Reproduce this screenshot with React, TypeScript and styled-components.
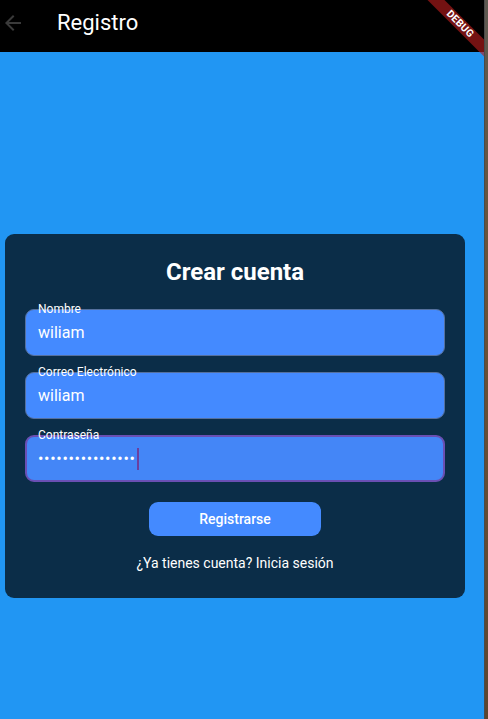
import React from "react";
import styled, { createGlobalStyle } from "styled-components";

const Global = createGlobalStyle`
  html, body { margin: 0; padding: 0; background: #5a4630; }
  body { font-family: Roboto, "Noto Sans", "Liberation Sans", sans-serif; }
  * { box-sizing: border-box; }
`;

const Screen = styled.div`
  display: flex;
  width: 488px;
  height: 719px;
  overflow: hidden;
`;

const Frame = styled.div`
  position: relative;
  width: 484px;
  height: 719px;
  overflow: hidden;
  background: #2196f3;
  display: flex;
  flex-direction: column;
`;

const Edge = styled.div`
  width: 1px;
  height: 719px;
  background: #4a4a4a;
`;

const Desk = styled.div`
  flex: 1;
  height: 719px;
  background: linear-gradient(180deg, #5e5a52 0%, #6b5238 40%, #5c4530 100%);
`;

const AppBar = styled.header`
  height: 52px;
  background: #000;
  display: flex;
  align-items: center;
  padding: 0 0 6px 1px;
`;

const BackIcon = styled.svg`
  width: 24px;
  height: 24px;
  fill: #3a3a3a;
`;

const Title = styled.h1`
  margin: 0 0 0 32px;
  font-size: 22px;
  font-weight: 400;
  color: #fff;
  line-height: 28px;
`;

const Banner = styled.div`
  position: absolute;
  left: 420px;
  top: 18px;
  width: 80px;
  height: 12px;
  transform: rotate(45deg);
  background: rgba(183, 28, 28, 0.63);
  color: #fff;
  font-size: 10.2px;
  font-weight: 700;
  line-height: 12px;
  text-align: center;
  letter-spacing: 0.2px;
`;

const Body = styled.main`
  flex: 1;
  padding: 182px 0 0 5px;
`;

const Card = styled.section`
  width: 460px;
  background: #0b2d48;
  border-radius: 9px;
  padding: 24px 20px 26px;
  display: flex;
  flex-direction: column;
  align-items: center;
`;

const Heading = styled.h2`
  margin: 0;
  font-size: 24px;
  font-weight: 700;
  line-height: 28px;
  color: #fff;
`;

const Fields = styled.div`
  margin-top: 23px;
  width: 100%;
  display: flex;
  flex-direction: column;
  gap: 16px;
`;

const Field = styled.div<{ $focused?: boolean }>`
  position: relative;
  height: 47px;
  border-radius: 9px;
  background: ${(p) => (p.$focused ? "#4486f7" : "#448aff")};
  border: ${(p) => (p.$focused ? "2px solid #6a4fb3" : "1px solid #55709e")};
  display: flex;
  align-items: center;
  padding-left: ${(p) => (p.$focused ? "11px" : "12px")};
`;

const Label = styled.span<{ $focused?: boolean }>`
  position: absolute;
  left: ${(p) => (p.$focused ? "10px" : "11px")};
  top: ${(p) => (p.$focused ? "-9px" : "-8px")};
  font-size: 12px;
  line-height: 14px;
  color: #fff;
  padding: 0 1px;
`;

const Value = styled.span`
  font-size: 16px;
  line-height: 19px;
  color: #fff;
  display: flex;
  align-items: center;
`;

const Dots = styled.span`
  letter-spacing: 0.7px;
`;

const Caret = styled.span`
  display: inline-block;
  width: 2px;
  height: 22px;
  margin-left: 1px;
  background: #6b3fa0;
`;

const Button = styled.button`
  margin-top: 20px;
  width: 172px;
  height: 34px;
  border: none;
  border-radius: 9px;
  background: #448aff;
  color: #fff;
  font-family: inherit;
  font-size: 14px;
  font-weight: 500;
  cursor: pointer;
`;

const LinkText = styled.a`
  margin-top: 19px;
  font-size: 14px;
  line-height: 17px;
  color: #fff;
  text-decoration: none;
`;

export default function App() {
  return (
    <>
      <Global />
      <Screen>
        <Frame>
          <AppBar>
            <BackIcon viewBox="0 0 24 24">
              <path d="M20 11H7.83l5.59-5.59L12 4l-8 8 8 8 1.41-1.41L7.83 13H20v-2z" />
            </BackIcon>
            <Title>Registro</Title>
          </AppBar>
          <Body>
            <Card>
              <Heading>Crear cuenta</Heading>
              <Fields>
                <Field>
                  <Label>Nombre</Label>
                  <Value>wiliam</Value>
                </Field>
                <Field>
                  <Label>Correo Electrónico</Label>
                  <Value>wiliam</Value>
                </Field>
                <Field $focused>
                  <Label $focused>Contraseña</Label>
                  <Value>
                    <Dots>••••••••••••••••</Dots>
                    <Caret />
                  </Value>
                </Field>
              </Fields>
              <Button>Registrarse</Button>
              <LinkText>¿Ya tienes cuenta? Inicia sesión</LinkText>
            </Card>
          </Body>
          <Banner>DEBUG</Banner>
        </Frame>
        <Edge />
        <Desk />
      </Screen>
    </>
  );
}
